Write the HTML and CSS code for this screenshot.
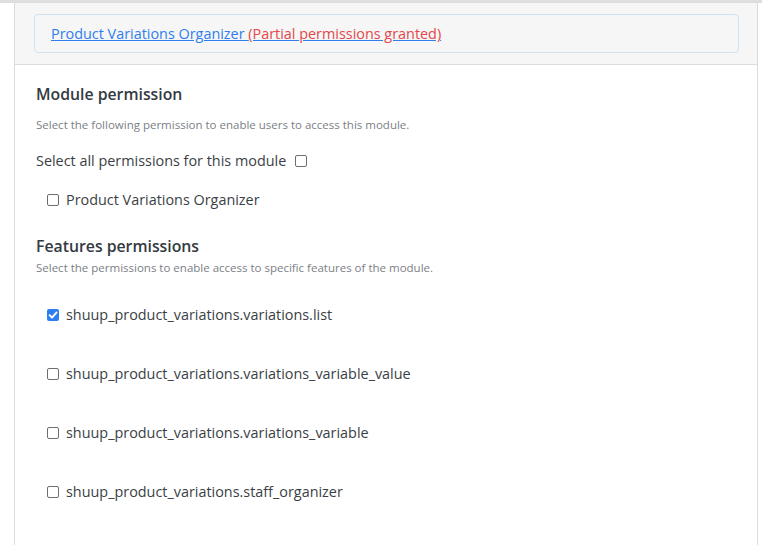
FILE: index.html
```html
<!DOCTYPE html>
<html>
<head>
<meta charset="utf-8">
<link rel="stylesheet" href="styles.css">
</head>
<body>
<div class="topbar"></div>
<div class="card">
  <div class="card-header">
    <div class="title-box">
      <a class="title-link" href="#">Product Variations Organizer <span class="partial">(Partial permissions granted)</span></a>
    </div>
  </div>
  <div class="card-body">
    <h3 class="section-title">Module permission</h3>
    <p class="help">Select the following permission to enable users to access this module.</p>
    <label class="select-all">Select all permissions for this module <span class="cb"></span></label>
    <label class="perm first"><span class="cb"></span>Product Variations Organizer</label>

    <h3 class="section-title features">Features permissions</h3>
    <p class="help tight">Select the permissions to enable access to specific features of the module.</p>
    <div class="perm-list">
      <label class="perm"><span class="cb checked"><svg viewBox="0 0 12 12" width="12" height="12"><path d="M2.6 6.2 L5 8.6 L9.6 3.4" fill="none" stroke="#fff" stroke-width="1.9" stroke-linecap="round" stroke-linejoin="round"/></svg></span>shuup_product_variations.variations.list</label>
      <label class="perm"><span class="cb"></span>shuup_product_variations.variations_variable_value</label>
      <label class="perm"><span class="cb"></span>shuup_product_variations.variations_variable</label>
      <label class="perm"><span class="cb"></span>shuup_product_variations.staff_organizer</label>
    </div>
  </div>
</div>
</body>
</html>
```
FILE: styles.css
```css
* { box-sizing: border-box; }
html, body { margin: 0; padding: 0; background: #fff; }
body { font-family: "Open Sans", "Noto Sans", sans-serif; color: #3a3f45; }

.topbar { height: 3px; background: #dedede; }

.card {
  margin: 0 4px 0 14px;
  border-left: 1px solid #dcdcdc;
  border-right: 1px solid #dcdcdc;
  height: 542px;
}

.card-header {
  background: #f6f6f6;
  padding: 11px 18px 11px 19px;
  border-bottom: 1px solid #dcdcdc;
}

.title-box {
  height: 39px;
  border: 1px solid #cfe3f7;
  border-radius: 4px;
  padding: 0 16px;
  display: flex;
  align-items: center;
}

.title-link {
  font-size: 14.4px;
  line-height: 20px;
  color: #2f7ef0;
  text-decoration: underline;
  margin-top: 1px;
}
.partial { color: #e2474b; }

.card-body { padding: 18px 20px 0 21px; }

.section-title {
  margin: 0;
  font-size: 15.8px;
  line-height: 22px;
  font-weight: 600;
  color: #333a41;
}
.section-title.features { margin-top: 25px; }

.help {
  margin: 13px 0 0;
  font-size: 11.5px;
  line-height: 14px;
  color: #7b8086;
}
.help.tight { margin-top: 4px; }

.select-all {
  display: flex;
  align-items: center;
  gap: 9px;
  margin-top: 19px;
  font-size: 14.4px;
  line-height: 20px;
}

.perm {
  display: flex;
  align-items: center;
  gap: 7px;
  font-size: 14.4px;
  line-height: 20px;
  padding-left: 11px;
}
.perm.first { margin-top: 19px; }

.perm-list {
  display: flex;
  flex-direction: column;
  gap: 39px;
  margin-top: 30px;
}

.cb {
  width: 12px;
  height: 12px;
  border: 1px solid #6e6e6e;
  border-radius: 2px;
  background: #fff;
  display: inline-flex;
  flex-shrink: 0;
}
.cb.checked {
  background: #2f7ef0;
  border-color: #2f7ef0;
  border-width: 0;
}
.cb svg { display: block; }
```
